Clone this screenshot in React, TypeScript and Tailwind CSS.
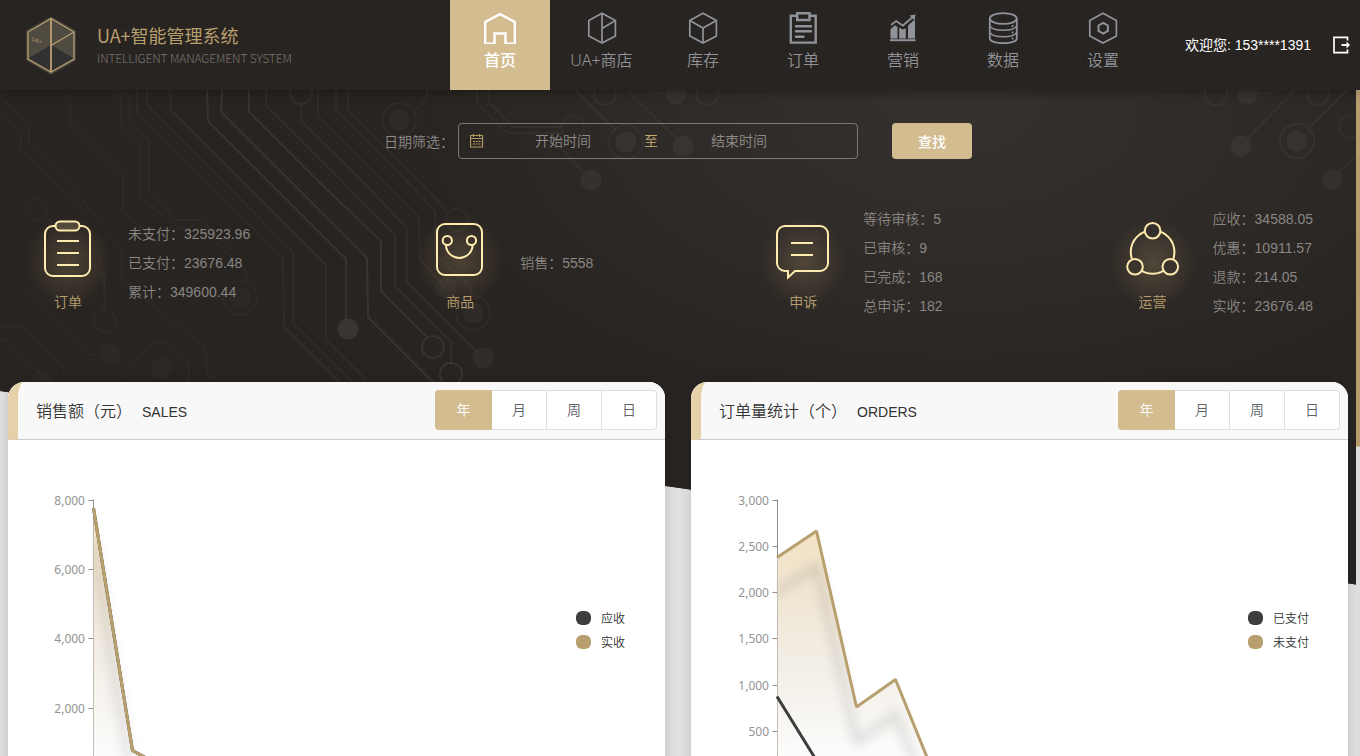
import type { ReactNode } from "react";

const gold = "#b89f6e";
const cream = "#ffebb0";

/* ---------- header ---------- */

function Logo() {
  return (
    <svg viewBox="20 10 62 70" className="h-[70px] w-[62px] shrink-0">
      <path d="M51 17.300 75 31v29L51 74 27 60V31Z" fill="#504b41" stroke="#4a4640" strokeWidth="1.500" />
      <path d="M51 45 74 58.500 51 72 28 58.500Z" fill="#323131" />
      <path d="M51 18.500 74 32v27L51 72 28 59V32Z" fill="none" stroke="#b69d70" strokeWidth="1.300" />
      <path d="M51 18.500v54" stroke="#b69d70" strokeWidth="1.900" />
      <path d="M51 45.500 74 32" stroke="#b69d70" strokeWidth="1.300" />
      <text x="31" y="40.500" transform="rotate(20 31 40.500)" fill="#b69d70" className="font-['Liberation_Sans',sans-serif] text-[5.500px]">
        UA+
      </text>
    </svg>
  );
}

const HEX = "M16 1.200 29.400 8.600v15.300L16 31 2.800 23.900V8.600Z";

const navItems: { label: string; width: string; icon: ReactNode }[] = [
  {
    label: "首页",
    width: "w-[100px]",
    icon: <path d="M1.200 31.800V10L16 2.200 30.800 10v21.800h-9.300V21.500h-11v10.300Z" strokeWidth="2.400" />,
  },
  {
    label: "UA+商店",
    width: "w-[103px]",
    icon: (
      <>
        <path d={HEX} strokeWidth="1.700" />
        <path d="M16 1.200V31M16 16.500l13.400-7.900" strokeWidth="1.700" />
      </>
    ),
  },
  {
    label: "库存",
    width: "w-[100px]",
    icon: (
      <>
        <path d={HEX} strokeWidth="1.700" />
        <path d="M2.800 8.600 16 16l13.400-7.400M16 16v15" strokeWidth="1.700" />
      </>
    ),
  },
  {
    label: "订单",
    width: "w-[100px]",
    icon: (
      <>
        <path d="M9.500 3.800H3.800v26.800h24.900V3.800h-5.700" strokeWidth="2.400" />
        <path d="M10.200 1.200h12.300v6.800H10.200Z" strokeWidth="2.400" />
        <path d="M9 14.200h15M9 19.300h15M9 24.800h7.500" strokeWidth="2.400" strokeLinecap="round" />
      </>
    ),
  },
  {
    label: "营销",
    width: "w-[100px]",
    icon: (
      <>
        <path d="M3.500 17 8 13.300l2.500 1.700V26.500h-7ZM12.200 15.500l3.600 2 3-1.200v10.200h-6.600ZM21 13.500l5.500-5H28v18h-7Z" fill="currentColor" stroke="none" />
        <path d="M3 28.200h25.500" strokeWidth="2" />
        <path d="M4 13 9.200 9l6.600 4.500L26.500 4.500" strokeWidth="1.800" />
        <path d="M22.500 3.600 28.600 2.600 27.500 8.500Z" fill="currentColor" stroke="none" />
      </>
    ),
  },
  {
    label: "数据",
    width: "w-[100px]",
    icon: (
      <>
        <ellipse cx="16.300" cy="6.500" rx="13.500" ry="5.400" strokeWidth="1.800" />
        <path d="M2.800 6.500v20c0 2.800 5.700 4.700 13.500 4.700s13.500-1.900 13.500-4.700v-20" strokeWidth="1.800" />
        <path d="M2.800 13.800c1.200 2.600 6.300 4.500 13.500 4.500s12.300-1.900 13.500-4.500M2.800 20.300c1.200 2.600 6.300 4.500 13.500 4.500s12.300-1.900 13.500-4.500" strokeWidth="1.500" />
        <path d="M24.700 14h1.700M24.700 20.500h1.700M24.700 26.500h1.700" strokeWidth="1.800" />
      </>
    ),
  },
  {
    label: "设置",
    width: "w-[100px]",
    icon: (
      <>
        <path d={HEX} strokeWidth="1.700" />
        <path d="M16.200 10.800l4.700 2.700v5.300l-4.700 2.700-4.700-2.700v-5.300Z" strokeWidth="2" />
      </>
    ),
  },
];

function Header() {
  return (
    <header className="relative z-10 flex h-[90px] w-full bg-[#282421] shadow-[0_2px_10px_rgba(0,0,0,0.35)]">
      <div className="flex w-[450px] items-start pt-2.5 pl-5">
        <Logo />
        <div className="pt-[10px] pl-[15px] font-['Noto_Sans_CJK_SC',sans-serif] font-normal">
          <div className="text-[18px] leading-[30px] whitespace-nowrap text-[#b89f6e]">UA+智能管理系统</div>
          <div className="text-[12px] leading-[16px] font-light tracking-[-0.130px] whitespace-nowrap text-[#7b7671]">
            INTELLIGENT MANAGEMENT SYSTEM
          </div>
        </div>
      </div>
      <nav className="flex">
        {navItems.map((item, i) => (
          <a
            key={item.label}
            className={`${item.width} flex flex-col items-center pt-3 ${i === 0 ? "bg-[#d3bc90] font-medium text-white" : "text-[#909399]"}`}
          >
            <svg viewBox="0 0 32 32" className="size-8" fill="none" stroke="currentColor">
              {item.icon}
            </svg>
            <span className="mt-1 font-['Noto_Sans','Noto_Sans_CJK_SC',sans-serif] text-base leading-6">{item.label}</span>
          </a>
        ))}
      </nav>
      <div className="flex flex-1 items-center justify-end pr-[9px] text-sm font-normal text-white">
        <span className="whitespace-nowrap">欢迎您: 153****1391</span>
        <svg viewBox="0 0 19 18" className="ml-[21px] h-[18px] w-[19px]" fill="none" stroke="#fff" strokeWidth="1.700">
          <path d="M15.500 4.500V1.400H2v15.200h13.500v-3.100" />
          <path d="M9.500 9h6" strokeWidth="1.900" />
          <path d="M14.500 5.600 18 9l-3.500 3.400Z" fill="#fff" stroke="none" />
        </svg>
      </div>
    </header>
  );
}

/* ---------- circuit-board backdrop ---------- */

const traces: [string, number][] = [
  ["M0 97 29 126v17l37 37 56 70v30l83 67 2 26 10 7", 0.022],
  ["M0 113l21 20v17l62 60 22 67v33", 0.018],
  ["M60 90l10 10v22l53 53v36l37 34", 0.022],
  ["M112 90l9 8v27l19 19v54l40 30h20l46 42v13", 0.024],
  ["M122 90l8 7v23l19 20v52l27 28h24l30 25", 0.022],
  ["M137 90v22l68 68 78 78 1 69 60 60", 0.035],
  ["M147 90v15l75 75 71 72v71l60 60", 0.035],
  ["M170 90l1 20 70 70 85 85v75l40 40", 0.04],
  ["M207 90l1 31 59 59 79 79v60", 0.07],
  ["M222 90l-1 22 68 68 78 78 1 59 72 72", 0.08],
  ["M249 90v22l68 68 64 61v50l46 46", 0.07],
  ["M266 90v15l75 75 54 55v51l56 56v22", 0.045],
  ["M301 104v17l60 59 46 48v54l70 70", 0.04],
  ["M318 90v26l64 64 37 37 1 43 26 28", 0.035],
  ["M336 90v20l70 70 29 31v42l36 35v10", 0.035],
  ["M348 90v20l70 70 30 32", 0.035],
  ["M427 90v8l-12 12", 0.03],
  ["M477 90v13l30 30h55", 0.035],
  ["M489 90v12l24 25h49", 0.035],
  ["M575 90l41 40", 0.04],
  ["M563 150l20 22", 0.035],
  ["M627 90l51 50", 0.035],
  ["M648 90l6 3h14", 0.03],
  ["M1295 90l-47 48", 0.04],
  ["M1347 90l-37 37", 0.04],
  ["M1356 155l-18 18", 0.04],
  ["M1257 93h14l4-3", 0.03],
  ["M0 327h22l42 42v13M0 340h8l40 42", 0.018],
  ["M46 217l20 15 38 45v33", 0.018],
  ["M18 285l70 70h15", 0.018],
  ["M118 380l36-38h15l20 20v20", 0.018],
];

const rings: [number, number, number, number][] = [
  [301, 93, 11, 0.045],
  [399, 120, 17, 0.035],
  [573, 127, 11, 0.03],
  [605, 94, 11, 0.04],
  [626, 142, 17, 0.035],
  [707, 94, 11, 0.035],
  [433, 347, 11, 0.07],
  [451, 374, 11, 0.07],
  [457, 220, 11, 0.035],
  [473, 313, 17, 0.035],
  [37, 209, 11, 0.02],
  [105, 321, 11, 0.022],
  [240, 298, 17, 0.022],
  [1216, 94, 11, 0.035],
  [1318, 94, 11, 0.035],
  [1350, 127, 11, 0.035],
  [1297, 141, 17, 0.045],
];

const dots: [number, number, number][] = [
  [399, 120, 0.035],
  [591, 180, 0.045],
  [626, 142, 0.045],
  [683, 146, 0.045],
  [676, 94, 0.04],
  [348, 329, 0.08],
  [483, 358, 0.045],
  [446, 288, 0.03],
  [473, 313, 0.035],
  [110, 354, 0.02],
  [161, 368, 0.02],
  [42, 380, 0.015],
  [240, 298, 0.02],
  [1247, 94, 0.04],
  [1241, 146, 0.045],
  [1297, 141, 0.045],
  [1332, 180, 0.04],
];

function Backdrop() {
  return (
    <svg viewBox="0 90 1356 666" className="absolute top-0 left-0 h-[666px] w-[1356px]" fill="none">
      <defs>
        <radialGradient id="glow" gradientUnits="userSpaceOnUse" cx="0" cy="0" r="1" gradientTransform="translate(960 110) scale(560 310)">
          <stop offset="0" stopColor="#35312e" />
          <stop offset="0.500" stopColor="#2f2b28" />
          <stop offset="1" stopColor="#282421" />
        </radialGradient>
      </defs>
      <rect x="0" y="90" width="1356" height="666" fill="#e0e0e0" />
      <path d="M0 90H1356V584.500L0 391Z" fill="#282421" />
      <path d="M0 90H1356V584.500L0 391Z" fill="url(#glow)" />
      {traces.map(([d, o]) => (
        <path key={d} d={d} stroke="#fff" strokeOpacity={o} strokeWidth="2" />
      ))}
      {rings.map(([x, y, r, o]) => (
        <circle key={`${x}-${y}`} cx={x} cy={y} r={r} stroke="#fff" strokeOpacity={o} strokeWidth="2" />
      ))}
      {dots.map(([x, y, o]) => (
        <circle key={`${x}-${y}`} cx={x} cy={y} r="10.500" fill="#fff" fillOpacity={o} />
      ))}
    </svg>
  );
}

/* ---------- filter ---------- */

function Filter() {
  return (
    <div className="flex h-9 items-center pl-[384px] text-sm text-[#8f8c89]">
      <span className="w-[74px] pt-px whitespace-nowrap">日期筛选：</span>
      <div className="flex h-9 w-[400px] items-center rounded border border-[#7b7875] pr-[24px] pl-[11px]">
        <svg viewBox="0 0 14 14" className="size-3.5" fill="none" stroke="#b39765" strokeWidth="1.200">
          <path d="M.5 1.500h12v11.500H.5ZM.5 4.500h12M3.500 0v3M9.500 0v3" />
          <path d="M3 7.500h2M5.700 7.500h2M8.500 7.500h2M3 10h2M5.700 10h2M8.500 10h2" />
        </svg>
        <span className="w-[158px] text-center">开始时间</span>
        <span className="w-[18px] text-center text-[#c6ab76]">至</span>
        <span className="w-[158px] text-center">结束时间</span>
      </div>
      <button className="ml-[34px] h-9 w-20 rounded bg-[#d3bc90] pt-px text-sm font-medium text-white">查找</button>
    </div>
  );
}

/* ---------- statistics ---------- */

const stats: { label: string; box: string; glow: [number, number]; rows: string[]; icon: ReactNode }[] = [
  {
    label: "订单",
    box: "8 190 120 100",
    glow: [68, 262],
    rows: ["未支付：325923.96", "已支付：23676.48", "累计：349600.44"],
    icon: (
      <>
        <path d="M55 226h-2a8 8 0 0 0-8 8v34a8 8 0 0 0 8 8h29a8 8 0 0 0 8-8v-34a8 8 0 0 0-8-8h-2" />
        <rect x="55.500" y="221.500" width="24" height="9" rx="4.500" fill="#8a7d5c" fillOpacity="0.400" />
        <path d="M57 241h22M57 253h22M57 265h22" />
      </>
    ),
  },
  {
    label: "商品",
    box: "400 190 120 100",
    glow: [460, 260],
    rows: ["销售：5558"],
    icon: (
      <>
        <rect x="437" y="224" width="45" height="51" rx="8" />
        <circle cx="447.300" cy="240.500" r="4.600" />
        <circle cx="471.500" cy="240.500" r="4.600" />
        <path d="M446 245c0 7 6 13 13.300 13s13.300-6 13.300-13" />
      </>
    ),
  },
  {
    label: "申诉",
    box: "743 190 120 100",
    glow: [803, 262],
    rows: ["等待审核：5", "已审核：9", "已完成：168", "总申诉：182"],
    icon: (
      <>
        <path d="M785 226h35a8 8 0 0 1 8 8v29a8 8 0 0 1-8 8h-25l-7 6.500V271h-3a8 8 0 0 1-8-8v-29a8 8 0 0 1 8-8Z" />
        <path d="M791 243h22M791 255h22" />
      </>
    ),
  },
  {
    label: "运营",
    box: "1092.700 190 120 100",
    glow: [1153, 264],
    rows: ["应收：34588.05", "优惠：10911.57", "退款：214.05", "实收：23676.48"],
    icon: (
      <>
        <circle cx="1152.300" cy="252" r="21.800" />
        <circle cx="1152.300" cy="230.700" r="7.800" fill="#332f2a" />
        <circle cx="1134.700" cy="266.700" r="7.800" fill="#3a342c" />
        <circle cx="1170" cy="266.700" r="7.800" fill="#3a342c" />
      </>
    ),
  },
];

function Stats() {
  return (
    <div className="flex h-[146px] justify-between pr-[43px] pl-2">
      {stats.map((s, i) => (
        <div key={s.label} className="flex items-center">
          <div className="flex h-[146px] w-[120px] flex-col items-center">
            <svg viewBox={s.box} className="h-[100px] w-[120px] overflow-visible" fill="none" stroke={cream} strokeWidth="2">
              <defs>
                <radialGradient id={`halo${i}`}>
                  <stop offset="0" stopColor="#a89068" stopOpacity="0.280" />
                  <stop offset="0.500" stopColor="#8f7656" stopOpacity="0.190" />
                  <stop offset="1" stopColor="#8a6c48" stopOpacity="0" />
                </radialGradient>
              </defs>
              <ellipse cx={s.glow[0]} cy={s.glow[1]} rx="44" ry="46" fill={`url(#halo${i})`} stroke="none" />
              {s.icon}
            </svg>
            <span className="relative text-sm leading-6 text-[#b89f6e]">{s.label}</span>
          </div>
          <ul className="text-sm leading-[29px] whitespace-nowrap text-[#898683]">
            {s.rows.map((r) => (
              <li key={r}>{r}</li>
            ))}
          </ul>
        </div>
      ))}
    </div>
  );
}

/* ---------- charts ---------- */

type ChartProps = {
  id: string;
  title: string;
  en: string;
  box: string;
  axisX: number;
  ticks: [string, number][];
  goldLine: string;
  darkLine: string;
  areaEnd: string;
  top: number;
  legendX: number;
  legend: [string, string];
};

function Chart(p: ChartProps) {
  return (
    <section className="flex h-[420px] w-[657px] flex-col overflow-hidden rounded-t-2xl bg-white">
      <div className="flex h-[58px] items-center rounded-tl-2xl border-b border-l-[10px] border-b-[#cccccc] border-l-[#e4d0a9] bg-[#f8f8f8] pr-2 pl-[18px] text-[#333]">
        <h2 className="pt-[3px] text-base whitespace-nowrap">{p.title}</h2>
        <span className="pt-[3px] pl-2.5 text-sm">{p.en}</span>
        <div className="mb-px ml-auto flex h-10 text-sm text-[#606266]">
          <span className="flex w-[57px] items-center justify-center rounded-l bg-[#d3bc90] text-white">年</span>
          <span className="flex w-[55px] items-center justify-center border-y border-r border-[#dcdfe6] bg-white">月</span>
          <span className="flex w-[55px] items-center justify-center border-y border-r border-[#dcdfe6] bg-white">周</span>
          <span className="flex w-[55px] items-center justify-center rounded-r border-y border-r border-[#dcdfe6] bg-white">日</span>
        </div>
      </div>
      <svg viewBox={p.box} className="h-[362px] w-[657px] shrink-0" fill="none">
        <defs>
          <linearGradient id={`${p.id}-area`} gradientUnits="userSpaceOnUse" x1="0" y1={p.top} x2="0" y2="775">
            <stop offset="0" stopColor="#f3e1c0" />
            <stop offset="0.250" stopColor="#efe4d0" />
            <stop offset="0.550" stopColor="#f2ede5" />
            <stop offset="0.850" stopColor="#faf9f7" />
            <stop offset="1" stopColor="#fff" />
          </linearGradient>
          <filter id={`${p.id}-blur`} x="-20%" y="-20%" width="140%" height="140%">
            <feGaussianBlur stdDeviation="5.500" />
          </filter>
          <clipPath id={`${p.id}-clip`}>
            <rect x={p.axisX - 1.5} y="440" width="500" height="400" />
          </clipPath>
        </defs>
        <path d={`M${p.axisX} 499.500V802`} stroke="#8f8f8f" />
        {p.ticks.map(([label, y]) => (
          <g key={label}>
            <path d={`M${p.axisX - 5} ${y}H${p.axisX}`} stroke="#8f8f8f" />
            <text x={p.axisX - 8.5} y={y + 4.5} textAnchor="end" fill="#949494" className="font-['Noto_Sans',sans-serif] text-xs font-normal">
              {label}
            </text>
          </g>
        ))}
        <g clipPath={`url(#${p.id}-clip)`}>
          <path d={p.goldLine + p.areaEnd} fill={`url(#${p.id}-area)`} fillOpacity="0.950" />
          <path d={p.goldLine} transform="translate(0 35)" stroke="#000" strokeOpacity="0.140" strokeWidth="6" filter={`url(#${p.id}-blur)`} />
          <path d={`M${p.axisX} ${p.top + 26}V802`} stroke="#c4beb4" />
          <path d={p.darkLine} stroke="#3d3d3d" strokeWidth="3" strokeLinejoin="bevel" />
          <path d={p.goldLine} stroke={gold} strokeWidth="3" strokeLinejoin="bevel" />
        </g>
        {p.legend.map((label, i) => (
          <g key={label}>
            <rect x={p.legendX} y={611 + i * 24} width="15" height="14" rx="6" fill={i === 0 ? "#3d3d3d" : gold} />
            <text x={p.legendX + 25} y={622.5 + i * 24} fill="#333" className="text-xs">
              {label}
            </text>
          </g>
        ))}
      </svg>
    </section>
  );
}

export default function App() {
  return (
    <div className="h-[756px] w-[1360px] overflow-hidden bg-[#dedede] font-['Liberation_Sans','Noto_Sans_CJK_SC',sans-serif] font-[350]">
      <Header />
      <div className="flex h-[666px]">
        <main className="relative h-[666px] w-[1356px] overflow-hidden">
          <Backdrop />
          <div className="relative pt-[33px]">
            <Filter />
            <div className="pt-[31px]">
              <Stats />
            </div>
            <div className="flex gap-[26px] px-2 pt-[46px]">
              <div className="rounded-t-2xl shadow-[0_0_12px_rgba(0,0,0,0.15)]">
                <Chart
                  id="sales"
                  title="销售额（元）"
                  en="SALES"
                  box="8 440 657 362"
                  axisX={93.5}
                  ticks={[["8,000", 500.5], ["6,000", 569.5], ["4,000", 638.5], ["2,000", 708.5]]}
                  goldLine="M93.500 508 132.500 750.500 172 772"
                  darkLine="M93.500 508 132.500 750.500 172 772"
                  areaEnd="V802H93.500Z"
                  top={508}
                  legendX={576}
                  legend={["应收", "实收"]}
                />
              </div>
              <div className="rounded-t-2xl shadow-[0_0_12px_rgba(0,0,0,0.15)]">
                <Chart
                  id="orders"
                  title="订单量统计（个）"
                  en="ORDERS"
                  box="691 440 657 362"
                  axisX={777.5}
                  ticks={[["3,000", 500.5], ["2,500", 546.5], ["2,000", 592.5], ["1,500", 638.5], ["1,000", 685.5], ["500", 731.5]]}
                  goldLine="M777 557.500 816.500 531 856.500 707 895.500 679.500 935 777"
                  darkLine="M777 696.500 823 771"
                  areaEnd="V802H777Z"
                  top={531}
                  legendX={1248}
                  legend={["已支付", "未支付"]}
                />
              </div>
            </div>
          </div>
        </main>
        <div className="h-[666px] w-1 bg-[#dddddd]">
          <div className="h-[357px] w-1 rounded bg-[#b79c6e]" />
        </div>
      </div>
    </div>
  );
}
